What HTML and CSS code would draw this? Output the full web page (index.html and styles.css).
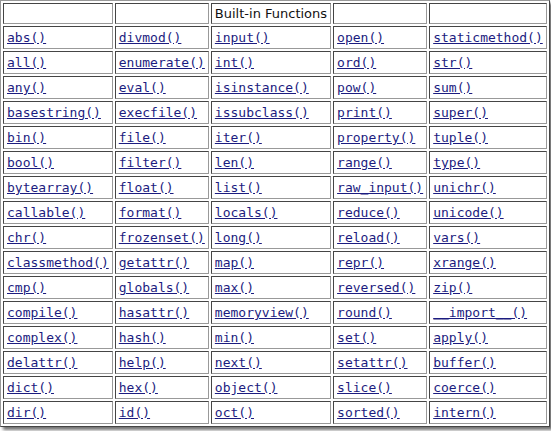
FILE: index.html
```html
<!DOCTYPE html>
<html>
<head>
<meta charset="utf-8">
<link rel="stylesheet" href="styles.css">
</head>
<body>
<div class="frame">
<table class="funcs">
<tr class="head"><td></td><td></td><td class="title">Built-in Functions</td><td></td><td></td></tr>
<tr><td><a href="#">abs()</a></td><td><a href="#">divmod()</a></td><td><a href="#">input()</a></td><td><a href="#">open()</a></td><td><a href="#">staticmethod()</a></td></tr>
<tr><td><a href="#">all()</a></td><td><a href="#">enumerate()</a></td><td><a href="#">int()</a></td><td><a href="#">ord()</a></td><td><a href="#">str()</a></td></tr>
<tr><td><a href="#">any()</a></td><td><a href="#">eval()</a></td><td><a href="#">isinstance()</a></td><td><a href="#">pow()</a></td><td><a href="#">sum()</a></td></tr>
<tr><td><a href="#">basestring()</a></td><td><a href="#">execfile()</a></td><td><a href="#">issubclass()</a></td><td><a href="#">print()</a></td><td><a href="#">super()</a></td></tr>
<tr><td><a href="#">bin()</a></td><td><a href="#">file()</a></td><td><a href="#">iter()</a></td><td><a href="#">property()</a></td><td><a href="#">tuple()</a></td></tr>
<tr><td><a href="#">bool()</a></td><td><a href="#">filter()</a></td><td><a href="#">len()</a></td><td><a href="#">range()</a></td><td><a href="#">type()</a></td></tr>
<tr><td><a href="#">bytearray()</a></td><td><a href="#">float()</a></td><td><a href="#">list()</a></td><td><a href="#">raw_input()</a></td><td><a href="#">unichr()</a></td></tr>
<tr><td><a href="#">callable()</a></td><td><a href="#">format()</a></td><td><a href="#">locals()</a></td><td><a href="#">reduce()</a></td><td><a href="#">unicode()</a></td></tr>
<tr><td><a href="#">chr()</a></td><td><a href="#">frozenset()</a></td><td><a href="#">long()</a></td><td><a href="#">reload()</a></td><td><a href="#">vars()</a></td></tr>
<tr><td><a href="#">classmethod()</a></td><td><a href="#">getattr()</a></td><td><a href="#">map()</a></td><td><a href="#">repr()</a></td><td><a href="#">xrange()</a></td></tr>
<tr><td><a href="#">cmp()</a></td><td><a href="#">globals()</a></td><td><a href="#">max()</a></td><td><a href="#">reversed()</a></td><td><a href="#">zip()</a></td></tr>
<tr><td><a href="#">compile()</a></td><td><a href="#">hasattr()</a></td><td><a href="#">memoryview()</a></td><td><a href="#">round()</a></td><td><a href="#">__import__()</a></td></tr>
<tr><td><a href="#">complex()</a></td><td><a href="#">hash()</a></td><td><a href="#">min()</a></td><td><a href="#">set()</a></td><td><a href="#">apply()</a></td></tr>
<tr><td><a href="#">delattr()</a></td><td><a href="#">help()</a></td><td><a href="#">next()</a></td><td><a href="#">setattr()</a></td><td><a href="#">buffer()</a></td></tr>
<tr><td><a href="#">dict()</a></td><td><a href="#">hex()</a></td><td><a href="#">object()</a></td><td><a href="#">slice()</a></td><td><a href="#">coerce()</a></td></tr>
<tr><td><a href="#">dir()</a></td><td><a href="#">id()</a></td><td><a href="#">oct()</a></td><td><a href="#">sorted()</a></td><td><a href="#">intern()</a></td></tr>
</table>
</div>
</body>
</html>
```
FILE: styles.css
```css
html, body {
  margin: 0;
  padding: 0;
  background: #ffffff;
}
.frame {
  display: inline-block;
  box-shadow: 3px 3px 3px rgba(0,0,0,0.55);
  margin: 0;
}
.funcs {
  border: 1px outset #999;
  border-collapse: separate;
  border-spacing: 2px;
  font-family: "DejaVu Sans Mono", monospace;
  font-size: 13px;
  background: #fff;
}
.funcs td {
  border: 1px inset #999;
  padding: 0 3px;
  height: 21px;
  white-space: nowrap;
}
.funcs .head td {
  height: 19px;
}
.funcs a {
  color: #1c1c80;
  text-decoration: underline;
}
.funcs .title {
  font-family: "DejaVu Sans", sans-serif;
  font-size: 13px;
  color: #111;
}
```
